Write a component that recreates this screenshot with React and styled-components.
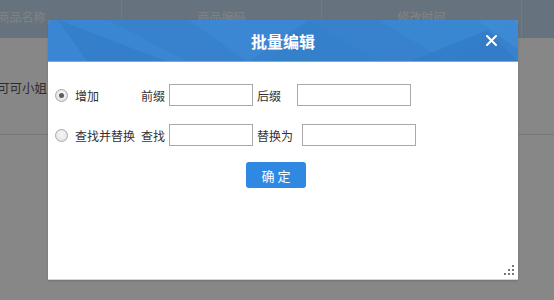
import React from "react";
import styled, { createGlobalStyle } from "styled-components";

const GlobalStyle = createGlobalStyle`
  html, body {
    margin: 0;
    padding: 0;
    width: 554px;
    height: 300px;
    overflow: hidden;
    background: #fff;
    font-family: "Noto Sans CJK SC", "Liberation Sans", sans-serif;
  }
`;

const Page = styled.div`
  position: relative;
  width: 554px;
  height: 300px;
  overflow: hidden;
`;

const Table = styled.div`
  margin-left: -78px;
  width: 700px;
  font-size: 12px;
`;

const HeadRow = styled.div`
  display: flex;
  height: 38px;
  background: #c1d9f0;
`;

const HeadCell = styled.div`
  width: 200px;
  flex: none;
  display: flex;
  align-items: center;
  justify-content: center;
  padding-bottom: 6px;
  box-sizing: border-box;
  color: #f4f6f8;
  border-right: 1px solid #d8e6f4;
`;

const BodyRow = styled.div`
  display: flex;
  height: 96px;
  border-bottom: 1px solid #e2e2e2;
`;

const BodyCell = styled.div`
  width: 200px;
  flex: none;
  display: flex;
  align-items: center;
  justify-content: center;
  padding-top: 2px;
  box-sizing: border-box;
  color: #555;
  font-size: 12.5px;
`;

const Overlay = styled.div`
  position: absolute;
  inset: 0;
  background: rgba(0, 0, 0, 0.47);
`;

const Dialog = styled.div`
  position: absolute;
  left: 48px;
  top: 20px;
  width: 470px;
  height: 260px;
  display: flex;
  flex-direction: column;
  background: #fff;
  border-radius: 4px 4px 0 0;
  box-shadow: 0 1px 2px rgba(0, 0, 0, 0.15);
  border-bottom: 1px solid #d6d6d6;
  box-sizing: border-box;
`;

const Header = styled.div`
  position: relative;
  height: 42px;
  flex: none;
  display: flex;
  align-items: center;
  justify-content: center;
  background: #3882cd;
  border-radius: 4px 4px 0 0;
  border-bottom: 1px solid #7aa9d8;
  box-sizing: border-box;
  overflow: hidden;
`;

const Texture = styled.svg`
  position: absolute;
  inset: 0;
`;

const Title = styled.h3`
  position: relative;
  margin: 0;
  color: #fff;
  font-size: 16px;
  font-weight: bold;
`;

const Close = styled.button`
  position: absolute;
  right: 21px;
  top: 15px;
  width: 11px;
  height: 11px;
  padding: 0;
  border: none;
  background: none;
  cursor: pointer;
  display: flex;
`;

const Body = styled.div`
  position: relative;
  flex: 1;
  display: flex;
  flex-direction: column;
  padding: 22px 0 0 7px;
`;

const Row = styled.div`
  display: flex;
  align-items: center;
  height: 22px;
  margin-bottom: 18px;
  font-size: 12px;
  color: #333;
`;

const Option = styled.label`
  display: flex;
  align-items: center;
  width: 86px;
  flex: none;
`;

const Radio = styled.span`
  width: 11px;
  height: 11px;
  margin-right: 7px;
  border-radius: 50%;
  border: 1px solid #a8a8a8;
  background: radial-gradient(circle at 50% 40%, #f6f6f6 0%, #dedede 100%);
  display: flex;
  align-items: center;
  justify-content: center;
  flex: none;

  &::after {
    content: "";
    width: 5px;
    height: 5px;
    border-radius: 50%;
    background: ${(p) => (p.$checked ? "#5d5d5d" : "transparent")};
  }
`;

const Label = styled.span`
  margin-right: ${(p) => p.$gap}px;
  white-space: nowrap;
`;

const Input = styled.input`
  width: ${(p) => p.$w}px;
  height: 22px;
  box-sizing: border-box;
  border: 1px solid #a9a9a9;
  background: #fff;
  padding: 0 3px;
  margin: 0 4px 0 0;
  font-size: 12px;
  outline: none;
`;

const Actions = styled.div`
  display: flex;
  justify-content: center;
  margin-top: -2px;
  padding-right: 21px;
`;

const Button = styled.button`
  width: 60px;
  height: 26px;
  border: none;
  border-radius: 3px;
  background: #2f89e3;
  color: #fff;
  font-family: "Noto Sans CJK SC", sans-serif;
  font-size: 13px;
  letter-spacing: 3px;
  padding: 0 0 0 3px;
  cursor: pointer;
`;

const Grip = styled.svg`
  position: absolute;
  right: 2px;
  bottom: 2px;
`;

export default function App() {
  return (
    <Page>
      <GlobalStyle />
      <Table>
        <HeadRow>
          <HeadCell>商品名称</HeadCell>
          <HeadCell>商品编码</HeadCell>
          <HeadCell>修改时间</HeadCell>
          <HeadCell />
        </HeadRow>
        <BodyRow>
          <BodyCell>可可小姐</BodyCell>
          <BodyCell />
          <BodyCell />
        </BodyRow>
      </Table>
      <Overlay />
      <Dialog>
        <Header>
          <Texture width="470" height="42" viewBox="0 0 470 42">
            <polygon points="0,0 60,0 140,42 0,42" fill="#3a86d2" />
            <polygon points="10,0 120,42 40,42" fill="#327bc6" opacity="0.7" />
            <polygon points="140,0 260,0 200,42" fill="#3c88d4" opacity="0.8" />
            <polygon points="260,0 330,42 220,42" fill="#347ec9" opacity="0.6" />
            <polygon points="330,0 470,0 400,42" fill="#3b87d3" opacity="0.7" />
            <polygon points="360,42 440,10 470,42" fill="#3079c5" opacity="0.6" />
            <polygon points="430,0 470,0 470,30" fill="#4490da" opacity="0.5" />
          </Texture>
          <Title>批量编辑</Title>
          <Close aria-label="close">
            <svg width="11" height="11" viewBox="0 0 11 11">
              <path d="M1 1 L10 10 M10 1 L1 10" stroke="#fff" strokeWidth="2" strokeLinecap="round" />
            </svg>
          </Close>
        </Header>
        <Body>
          <Row>
            <Option>
              <Radio $checked />
              增加
            </Option>
            <Label $gap={4}>前缀</Label>
            <Input $w={84} />
            <Label $gap={16}>后缀</Label>
            <Input $w={114} />
          </Row>
          <Row>
            <Option>
              <Radio />
              查找并替换
            </Option>
            <Label $gap={4}>查找</Label>
            <Input $w={84} />
            <Label $gap={9}>替换为</Label>
            <Input $w={114} />
          </Row>
          <Actions>
            <Button>确定</Button>
          </Actions>
          <Grip width="12" height="12" viewBox="0 0 12 12">
            <rect x="8" y="0" width="2" height="2" fill="#777" />
            <rect x="4" y="4" width="2" height="2" fill="#777" />
            <rect x="8" y="4" width="2" height="2" fill="#777" />
            <rect x="0" y="8" width="2" height="2" fill="#777" />
            <rect x="4" y="8" width="2" height="2" fill="#777" />
            <rect x="8" y="8" width="2" height="2" fill="#777" />
          </Grip>
        </Body>
      </Dialog>
    </Page>
  );
}
